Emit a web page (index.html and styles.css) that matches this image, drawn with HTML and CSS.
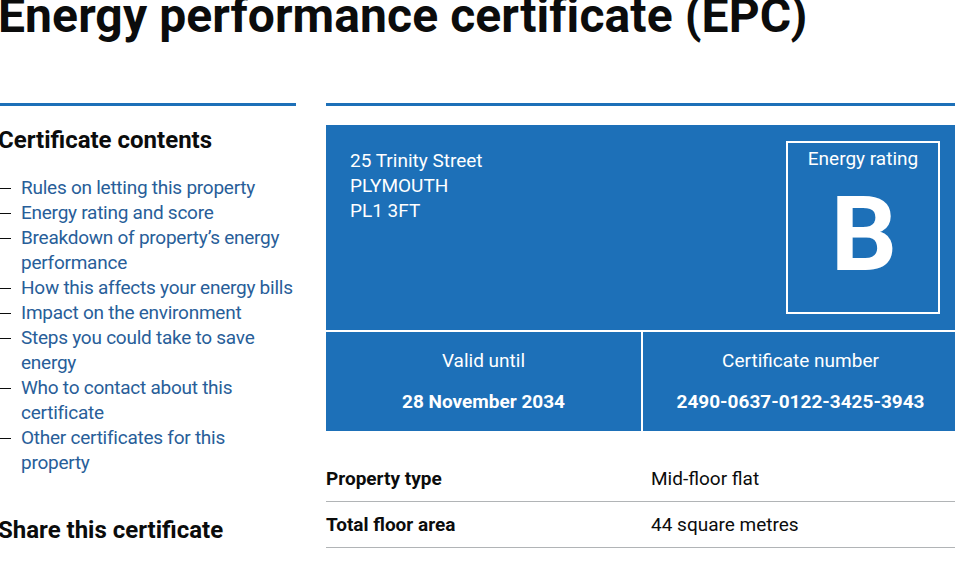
FILE: index.html
```html
<!DOCTYPE html>
<html lang="en">
<head>
    <meta charset="UTF-8">
    <meta name="viewport" content="width=device-width, initial-scale=1.0">
    <title>Energy performance certificate (EPC)</title>
    <link rel="stylesheet" href="styles.css">
</head>
<body>
    <div class="page">
        <h1 class="page-title">Energy performance certificate (EPC)</h1>

        <div class="columns">
            <aside class="sidebar">
                <h2 class="sidebar-heading">Certificate contents</h2>
                <ul class="contents">
                    <li><a href="#letting">Rules on letting this property</a></li>
                    <li><a href="#rating">Energy rating and score</a></li>
                    <li><a href="#breakdown">Breakdown of property’s energy performance</a></li>
                    <li><a href="#bills">How this affects your energy bills</a></li>
                    <li><a href="#environment">Impact on the environment</a></li>
                    <li><a href="#steps">Steps you could take to save energy</a></li>
                    <li><a href="#contact">Who to contact about this certificate</a></li>
                    <li><a href="#other">Other certificates for this property</a></li>
                </ul>
                <h2 class="sidebar-heading share">Share this certificate</h2>
            </aside>

            <main class="certificate">
                <div class="summary">
                    <p class="address">25 Trinity Street<br>PLYMOUTH<br>PL1 3FT</p>
                    <div class="rating">
                        <span class="rating-label">Energy rating</span>
                        <span class="rating-letter">B</span>
                    </div>
                </div>
                <div class="summary-meta">
                    <div class="meta-cell">
                        <span>Valid until</span>
                        <strong>28 November 2034</strong>
                    </div>
                    <div class="meta-cell">
                        <span>Certificate number</span>
                        <strong>2490-0637-0122-3425-3943</strong>
                    </div>
                </div>

                <dl class="details">
                    <div class="details-row">
                        <dt>Property type</dt>
                        <dd>Mid-floor flat</dd>
                    </div>
                    <div class="details-row">
                        <dt>Total floor area</dt>
                        <dd>44 square metres</dd>
                    </div>
                </dl>
            </main>
        </div>
    </div>
</body>
</html>
```

FILE: styles.css
```css
html {
    overflow: hidden;
}

body {
    margin: 0;
    padding: 0;
    font-family: Roboto, "Liberation Sans", Arial, sans-serif;
    font-size: 19px;
    line-height: 25px;
    color: #0b0c0c;
    background: #ffffff;
}

.page {
    width: 960px;
    margin: -9px 0 0 -2px;
}

.page-title {
    margin: 0 0 62px;
    font-size: 48px;
    line-height: 50px;
    font-weight: 700;
    letter-spacing: 0.1px;
}

.columns {
    display: grid;
    grid-template-columns: 298px 632px;
    column-gap: 30px;
    align-items: start;
}

/* left hand contents list */
.sidebar {
    border-top: 3px solid #1d70b8;
    padding-top: 19px;
}

.sidebar-heading {
    margin: 0 0 20px;
    font-size: 24px;
    line-height: 30px;
    font-weight: 700;
}

.sidebar-heading.share {
    margin-top: 40px;
}

.contents {
    list-style: none;
    margin: 0;
    padding: 0;
    letter-spacing: -0.25px;
}

.contents li {
    position: relative;
    padding-left: 23px;
}

/* dash marker in front of each link */
.contents li::before {
    content: "";
    position: absolute;
    left: 2px;
    top: 13px;
    width: 11px;
    height: 1px;
    background: #0b0c0c;
}

.contents a {
    color: #285e99;
    text-decoration: none;
}

/* certificate summary */
.certificate {
    border-top: 3px solid #1d70b8;
    padding-top: 19px;
}

.summary {
    display: flex;
    justify-content: space-between;
    align-items: flex-start;
    background: #1d70b8;
    color: #ffffff;
    padding: 16px 18px 16px 24px;
}

.address {
    margin: 7px 0 0;
}

.rating {
    display: flex;
    flex-direction: column;
    align-items: center;
    box-sizing: border-box;
    width: 154px;
    height: 173px;
    border: 2px solid #ffffff;
    padding-top: 3px;
}

.rating-letter {
    margin-top: 14px;
    font-size: 104px;
    line-height: 100px;
    font-weight: 700;
    padding-left: 2px;
}

.summary-meta {
    display: grid;
    grid-template-columns: 1fr 1fr;
    column-gap: 2px;
    margin-top: 2px;
}

.meta-cell {
    display: flex;
    flex-direction: column;
    align-items: center;
    gap: 16px;
    background: #1d70b8;
    color: #ffffff;
    padding: 16px 0 17px;
}

.meta-cell strong {
    font-weight: 700;
}

/* property details list */
.details {
    margin: 25px 0 0;
}

.details-row {
    display: grid;
    grid-template-columns: 325px 1fr;
    padding: 10px 0;
    border-bottom: 1px solid #b1b4b6;
}

.details-row dt {
    font-weight: 700;
}

.details-row dd {
    margin: 0;
}
```
